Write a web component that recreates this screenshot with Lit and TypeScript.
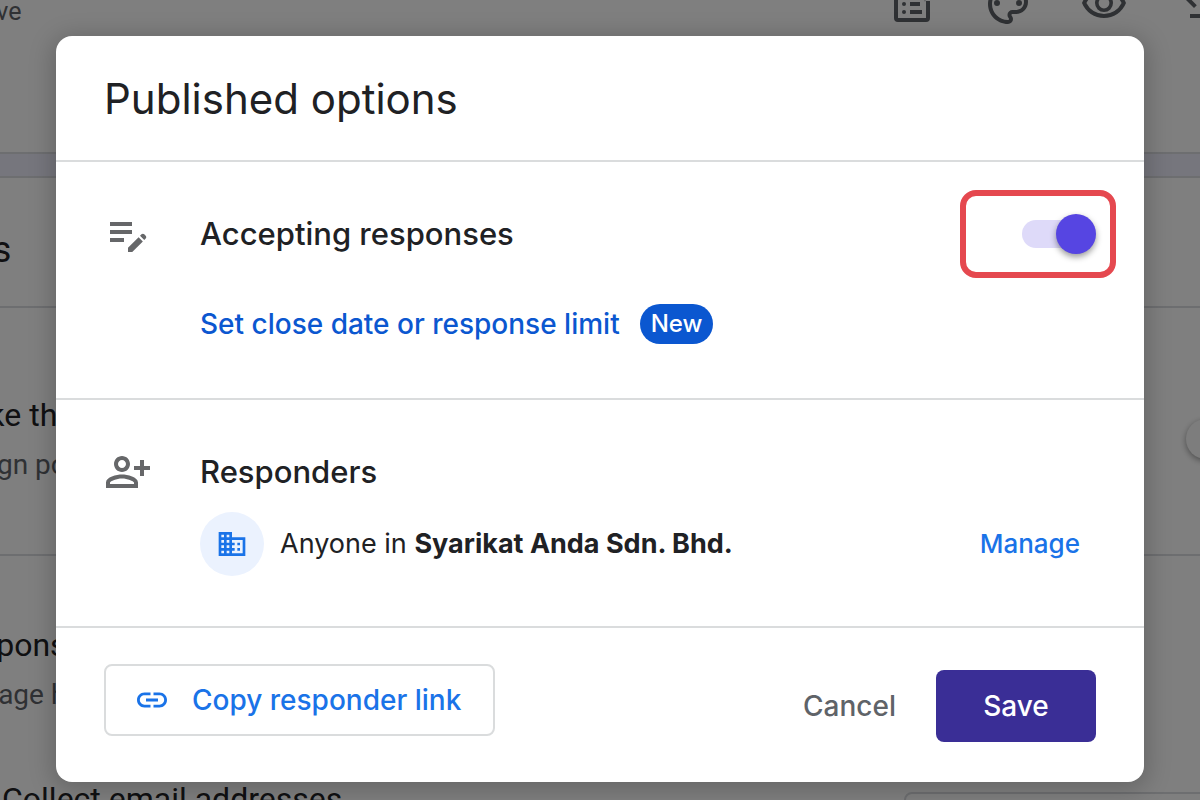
import { LitElement, html, css, svg } from "lit";
import { customElement, state } from "lit/decorators.js";

const icon = (body: unknown, size: string, viewBox = "0 0 24 24") =>
  html`<svg class="icon ${size}" viewBox=${viewBox} fill="currentColor" aria-hidden="true">${body}</svg>`;

const icons = {
  form: svg`<path d="M5 3a2 2 0 0 0-2 2v14a2 2 0 0 0 2 2h14a2 2 0 0 0 2-2V10.500h-2V19H5V5h9V3z"/><circle cx="8" cy="8" r="1"/><circle cx="8" cy="12" r="1"/><circle cx="8" cy="16" r="1"/><path d="M11 7h4v2h-4zM11 11h5v2h-5zM11 15h6v2h-6zM18.500 1l1 3 3 1-3 1-1 5-1-5-3-1 3-1z"/>`,
  palette: svg`<path d="M12 22C6.490 22 2 17.510 2 12S6.490 2 12 2s10 4.040 10 9c0 3.310-2.690 6-6 6h-1.770c-.28 0-.5.22-.5.5 0 .12.05.23.13.33.41.47.64 1.060.64 1.670A2.500 2.500 0 0 1 12 22zm0-18c-4.410 0-8 3.590-8 8s3.590 8 8 8c.28 0 .5-.22.5-.5a.54.54 0 0 0-.14-.35c-.41-.46-.63-1.050-.63-1.650a2.500 2.500 0 0 1 2.500-2.500H16c2.210 0 4-1.790 4-4 0-3.860-3.590-7-8-7z"/><circle cx="6.500" cy="11.500" r="1.500"/><circle cx="9.500" cy="7.500" r="1.500"/><circle cx="14.500" cy="7.500" r="1.500"/><circle cx="17.500" cy="11.500" r="1.500"/>`,
  eye: svg`<path d="M480-320q75 0 127.500-52.500T660-500q0-75-52.500-127.500T480-680q-75 0-127.500 52.500T300-500q0 75 52.500 127.500T480-320Zm0-72q-45 0-76.500-31.500T372-500q0-45 31.500-76.500T480-608q45 0 76.500 31.500T588-500q0 45-31.500 76.500T480-392Zm0 192q-146 0-266-81.500T40-500q54-137 174-218.500T480-800q146 0 266 81.500T920-500q-54 137-174 218.500T480-200Zm0-300Zm0 220q113 0 207.500-59.500T832-500q-50-101-144.500-160.500T480-720q-113 0-207.500 59.500T128-500q50 101 144.500 160.500T480-280Z"/>`,
  undo: svg`<path d="M280-200v-80h284q63 0 109.500-40T720-420q0-60-46.500-100T564-560H312l104 104-56 56-200-200 200-200 56 56-104 104h252q97 0 166.500 63T800-420q0 94-69.500 157T564-200H280Z"/>`,
  editNote: svg`<path d="M3 10h11v2H3v-2zm0-2h11V6H3v2zm0 8h7v-2H3v2zm15.010-3.130.71-.71c.39-.39 1.020-.39 1.410 0l.71.71c.39.39.39 1.020 0 1.410l-.71.71-2.120-2.120zm-.71.71-5.300 5.300V21h2.120l5.300-5.300-2.120-2.120z"/>`,
  personAdd: svg`<path d="M13 8c0-2.210-1.790-4-4-4S5 5.790 5 8s1.790 4 4 4 4-1.790 4-4zm-2 0c0 1.100-.9 2-2 2s-2-.9-2-2 .9-2 2-2 2 .9 2 2zM1 17.200V20h16v-2.800C17 14.500 11.700 13.200 9 13.200s-8 1.300-8 4zM3 18v-.7c.2-.8 3.300-2.100 6-2.100s5.800 1.300 6 2.100v.7zM20 14v-3h3V9h-3V6h-2v3h-3v2h3v3z"/>`,
  building: svg`<path d="M12 7V3H2v18h20V7H12zM6 19H4v-2h2v2zm0-4H4v-2h2v2zm0-4H4V9h2v2zm0-4H4V5h2v2zm4 12H8v-2h2v2zm0-4H8v-2h2v2zm0-4H8V9h2v2zm0-4H8V5h2v2zm10 12h-8v-2h2v-2h-2v-2h2v-2h-2V9h8v10zm-2-8h-2v2h2v-2zm0 4h-2v2h2v-2z"/>`,
  link: svg`<path d="M3.900 12c0-1.710 1.390-3.100 3.100-3.100h4V7H7c-2.760 0-5 2.240-5 5s2.240 5 5 5h4v-1.900H7c-1.710 0-3.100-1.390-3.100-3.100zM8 13h8v-2H8v2zm9-6h-4v1.900h4c1.710 0 3.100 1.390 3.100 3.100s-1.390 3.100-3.100 3.100h-4V17h4c2.760 0 5-2.240 5-5s-2.240-5-5-5z"/>`,
};

@customElement("form-settings-page")
class FormSettingsPage extends LitElement {
  static styles = css`
    :host { display: block; color: #202124; font-family: Roboto, "Liberation Sans", sans-serif; white-space: nowrap; }
    .icon { display: block; width: 48px; height: 48px; flex: none; }
    .toolbar { box-sizing: border-box; height: 152px; display: flex; justify-content: space-between; align-items: flex-start; color: #5f6368; }
    .status { margin: -2px 0 0 -32px; font-size: 25px; line-height: 28px; }
    .tools { display: flex; gap: 48px; margin: -20px -24px 0 0; }
    .strip { height: 22px; border-top: 2px solid #dadce0; border-bottom: 2px solid #dadce0; background: #ededfa; }
    .title { box-sizing: border-box; height: 128px; margin: 0; padding: 50px 0 0; font-size: 36px; line-height: 44px; font-weight: 400; text-indent: -120px; }
    .setting { box-sizing: border-box; height: 248px; border-top: 2px solid #dadce0; display: flex; justify-content: space-between; padding-top: 87px; }
    .setting:last-of-type { height: auto; padding-top: 69px; }
    .words { margin-left: -57px; }
    .name { margin: 0 0 12px; font-size: 32px; line-height: 40px; font-weight: 400; }
    .note { margin: 0; font-size: 28px; line-height: 36px; color: #5f6368; }
    .knob { width: 40px; height: 40px; margin: 24px -26px 0 0; border-radius: 50%; background: #fafafa; box-shadow: 0 2px 6px rgba(0, 0, 0, 0.4); }
    .collect { display: flex; justify-content: space-between; align-items: flex-start; margin-top: 66px; font-size: 32px; line-height: 40px; padding-left: 2px; }
    .choice { box-sizing: border-box; width: 320px; height: 72px; margin: 13px -24px 0 0; border: 2px solid #dadce0; border-radius: 8px; }
  `;
  render() {
    return html`
      <div class="toolbar">
        <span class="status">Save</span>
        <div class="tools">
          ${icon(icons.form, "")}${icon(icons.palette, "")}
          ${icon(icons.eye, "", "0 -960 960 960")}${icon(icons.undo, "", "0 -960 960 960")}
        </div>
      </div>
      <div class="strip"></div>
      <h1 class="title">Settings</h1>
      <section class="setting">
        <div class="words"><h2 class="name">Make this</h2><p class="note">Assign point</p></div>
        <span class="knob"></span>
      </section>
      <section class="setting">
        <div class="words"><h2 class="name">Responses</h2><p class="note">Manage how</p></div>
      </section>
      <div class="collect"><span>Collect email addresses</span><span class="choice"></span></div>
    `;
  }
}

@customElement("published-options-dialog")
class PublishedOptionsDialog extends LitElement {
  @state() accepting = true;
  static styles = css`
    :host { display: block; font-family: Inter, "Liberation Sans", sans-serif; color: #202124; }
    .dialog { background: #fff; border-radius: 16px; box-shadow: 0 4px 24px 4px rgba(0, 0, 0, 0.2); }
    .icon { display: block; flex: none; }
    .large { width: 48px; height: 48px; color: #666769; }
    .medium { width: 36px; height: 36px; }
    .small { width: 32px; height: 32px; }
    .header { padding: 37px 48px 35px; border-bottom: 2px solid #dadcdd; }
    .title { margin: 0; font-size: 42px; line-height: 52px; font-weight: 400; }
    .section { padding: 48px 48px 50px; border-bottom: 2px solid #dadcdd; }
    .section.accepting { padding-bottom: 54px; }
    .row { display: flex; align-items: center; gap: 48px; }
    .heading { flex: 1; margin: 0; font-size: 31px; line-height: 48px; font-weight: 500; }
    .limit { display: flex; align-items: center; gap: 20px; margin-top: 46px; padding-left: 96px; }
    a { text-decoration: none; font-weight: 500; }
    .limit a { font-size: 28px; line-height: 40px; color: #0b57d0; }
    .badge { padding: 0 11px; border-radius: 20px; background: #0b57d0; color: #fff; font-size: 24px; line-height: 40px; font-weight: 500; }
    .toggle { position: relative; display: flex; }
    .toggle::after { content: ""; position: absolute; inset: -24px -20px -24px -62px; border: 6px solid #e5484f; border-radius: 16px; pointer-events: none; }
    .switch { appearance: none; position: relative; display: flex; align-items: center; width: 74px; height: 40px; margin: 0; }
    .switch::before { content: ""; width: 70px; height: 28px; border-radius: 14px; background: #dedaf9; }
    .switch::after { content: ""; position: absolute; left: 0; top: 0; width: 40px; height: 40px; border-radius: 50%; background: #fafafa; box-shadow: 0 3px 6px rgba(0, 0, 0, 0.4); }
    .switch:checked::after { left: auto; right: 0; background: #5645e2; }
    .audience { display: flex; align-items: center; gap: 16px; margin-top: 16px; padding: 0 16px 0 96px; }
    .avatar { display: grid; place-items: center; width: 64px; height: 64px; border-radius: 50%; background: #ebf2fe; color: #1a73e8; }
    .who { flex: 1; margin: 0; font-size: 27px; line-height: 36px; }
    .who b { font-weight: 700; }
    .audience a { font-size: 26px; line-height: 36px; color: #1a73e8; }
    .footer { display: flex; justify-content: space-between; min-height: 78px; padding: 36px 48px 40px; }
    button { box-sizing: border-box; height: 72px; border: 0; border-radius: 8px; background: none; font: 500 28px/36px Inter, "Liberation Sans", sans-serif; }
    .copy { display: flex; align-items: center; gap: 22px; padding: 0 32px 0 28px; border: 2px solid #dadcdd; color: #1a73e8; }
    .actions { display: flex; gap: 16px; align-self: flex-end; }
    .cancel { padding: 0 24px; color: #5f6368; }
    .save { width: 160px; padding: 0; background: #3a2e96; color: #fff; }
  `;
  render() {
    return html`
      <div class="dialog" role="dialog" aria-modal="true" aria-labelledby="title">
        <header class="header"><h2 class="title" id="title">Published options</h2></header>
        <section class="section accepting">
          <div class="row">
            ${icon(icons.editNote, "large")}
            <label class="heading" for="accepting">Accepting responses</label>
            <span class="toggle">
              <input class="switch" id="accepting" type="checkbox" role="switch" .checked=${this.accepting}
                @change=${(e: Event) => (this.accepting = (e.target as HTMLInputElement).checked)} />
            </span>
          </div>
          <div class="limit"><a href="#limit">Set close date or response limit</a><span class="badge">New</span></div>
        </section>
        <section class="section">
          <div class="row">${icon(icons.personAdd, "large")}<h3 class="heading">Responders</h3></div>
          <div class="audience">
            <span class="avatar">${icon(icons.building, "small")}</span>
            <p class="who">Anyone in <b>Syarikat Anda Sdn. Bhd.</b></p>
            <a href="#manage">Manage</a>
          </div>
        </section>
        <footer class="footer">
          <button class="copy" type="button">${icon(icons.link, "medium")}Copy responder link</button>
          <div class="actions">
            <button class="cancel" type="button">Cancel</button>
            <button class="save" type="button">Save</button>
          </div>
        </footer>
      </div>
    `;
  }
}

@customElement("app-root")
class AppRoot extends LitElement {
  static styles = css`
    :host { display: block; position: relative; height: 100vh; overflow: hidden; background: #fff; }
    .scrim { position: absolute; inset: 0; box-sizing: border-box; padding: 36px 56px; background: rgba(0, 0, 0, 0.5); }
  `;
  render() {
    return html`
      <form-settings-page></form-settings-page>
      <div class="scrim"><published-options-dialog></published-options-dialog></div>
    `;
  }
}
